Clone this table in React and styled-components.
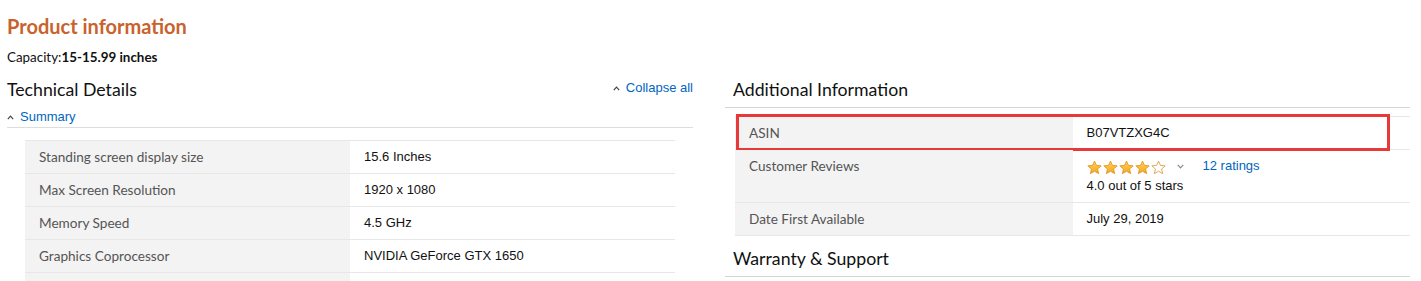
import React from "react";
import styled, { createGlobalStyle } from "styled-components";

const GlobalStyle = createGlobalStyle`
  html, body { margin: 0; padding: 0; background: #fff; }
  body { font-family: "Liberation Sans", Arial, sans-serif; color: #111; }
`;

const Page = styled.div`
  width: 1421px;
  box-sizing: border-box;
  padding: 14px 0 0 7px;
`;

const Title = styled.h2`
  margin: 0;
  font-family: Lato, "Noto Sans", sans-serif;
  font-weight: 700;
  font-size: 20px;
  line-height: 24px;
  color: #c9622c;
`;

const Capacity = styled.div`
  margin-top: 10px;
  font-family: Lato, "Noto Sans", sans-serif;
  font-size: 13.4px;
  line-height: 18px;
  color: #111;
  b { font-weight: 700; }
`;

const Columns = styled.div`
  margin-top: 12px;
  display: grid;
  grid-template-columns: 686px 685px;
  column-gap: 32px;
  align-items: start;
`;

const Column = styled.section`
  display: flex;
  flex-direction: column;
`;

const HeaderRow = styled.div`
  display: flex;
  align-items: center;
  justify-content: space-between;
  height: 24px;
`;

const Heading = styled.h3`
  margin: 0;
  font-family: Lato, "Noto Sans", sans-serif;
  font-weight: 400;
  font-size: 17.7px;
  line-height: 24px;
  color: #0f1111;
  padding-left: ${(p) => p.$indent || 0}px;
  padding-bottom: ${(p) => (p.$ruled ? 5 : 0)}px;
  border-bottom: ${(p) => (p.$ruled ? "1px solid #d5d5d5" : "none")};
  margin-top: ${(p) => p.$top || 0}px;
`;

const ToggleLink = styled.a`
  display: inline-flex;
  align-items: center;
  gap: 6px;
  font-family: "Liberation Sans", Arial, sans-serif;
  font-size: 13px;
  line-height: 18px;
  height: 18px;
  color: #0066c0;
  text-decoration: none;
  cursor: pointer;
  margin-top: ${(p) => p.$shift || 0}px;
`;

const SummaryRow = styled.div`
  display: flex;
  align-items: center;
  height: 18px;
  margin-top: 6px;
  padding-bottom: 1px;
  border-bottom: 1px solid #dddddd;
`;

const DetailTable = styled.div`
  margin: ${(p) => p.$top}px ${(p) => p.$right}px 0 ${(p) => p.$left}px;
  border-top: 1px solid #e7e7e7;
  display: flex;
  flex-direction: column;
`;

const Row = styled.div`
  position: relative;
  display: grid;
  grid-template-columns: 50% 50%;
  min-height: 32px;
  border-bottom: 1px solid #e7e7e7;
`;

const KeyCell = styled.div`
  background: #f3f3f3;
  padding: 7px 14px;
  font-family: Lato, "Noto Sans", sans-serif;
  font-size: 13.6px;
  line-height: 18px;
  color: #555;
`;

const ValueCell = styled.div`
  padding: 7px 14px;
  font-family: "Liberation Sans", Arial, sans-serif;
  font-size: 13px;
  line-height: 18px;
  color: #111;
`;

const Highlight = styled.div`
  position: absolute;
  left: 1px;
  top: -3px;
  width: 654px;
  height: 37px;
  box-sizing: border-box;
  border: 3px solid #e8393a;
  pointer-events: none;
`;

const RatingLine = styled.div`
  display: flex;
  align-items: center;
  height: 20px;
`;

const Stars = styled.span`
  display: inline-flex;
  gap: 1px;
`;

const Chevron = styled.span`
  display: inline-flex;
  margin-left: 11px;
  margin-top: -2px;
`;

const RatingsLink = styled.a`
  margin-left: 19px;
  color: #0066c0;
  text-decoration: none;
  margin-top: -2px;
`;

const Caret = ({ up = true, color = "#444" }) => (
  <svg width="7" height="5" viewBox="0 0 7 5">
    <path
      d={up ? "M0.8 4.2 L3.5 1.2 L6.2 4.2" : "M0.8 0.8 L3.5 3.8 L6.2 0.8"}
      fill="none"
      stroke={color}
      strokeWidth="1.2"
    />
  </svg>
);

const STAR = "M8 0.9 L10.1 5.5 L15.1 6 L11.3 9.3 L12.4 14.3 L8 11.7 L3.6 14.3 L4.7 9.3 L0.9 6 L5.9 5.5 Z";

const Star = ({ filled }) => (
  <svg width="15" height="15" viewBox="0 0 16 15.5">
    <defs>
      <linearGradient id="starGrad" x1="0" y1="0" x2="0" y2="1">
        <stop offset="0" stopColor="#ffd25c" />
        <stop offset="1" stopColor="#f5a623" />
      </linearGradient>
    </defs>
    <path
      d={STAR}
      fill={filled ? "url(#starGrad)" : "#fff"}
      stroke={filled ? "#e2921b" : "#d99a3a"}
      strokeWidth="0.9"
      strokeLinejoin="round"
    />
  </svg>
);

const technical = [
  ["Standing screen display size", "15.6 Inches"],
  ["Max Screen Resolution", "1920 x 1080"],
  ["Memory Speed", "4.5 GHz"],
  ["Graphics Coprocessor", "NVIDIA GeForce GTX 1650"],
  ["", ""],
];

export default function App() {
  return (
    <Page>
      <GlobalStyle />
      <Title>Product information</Title>
      <Capacity>
        Capacity:<b>15-15.99 inches</b>
      </Capacity>
      <Columns>
        <Column>
          <HeaderRow>
            <Heading>Technical Details</Heading>
            <ToggleLink $shift={-4}>
              <Caret />
              Collapse all
            </ToggleLink>
          </HeaderRow>
          <SummaryRow>
            <ToggleLink>
              <Caret />
              Summary
            </ToggleLink>
          </SummaryRow>
          <DetailTable $top={12} $left={18} $right={18}>
            {technical.map(([k, v], i) => (
              <Row key={i}>
                <KeyCell>{k}</KeyCell>
                <ValueCell>{v}</ValueCell>
              </Row>
            ))}
          </DetailTable>
        </Column>
        <Column>
          <Heading $indent={8} $ruled>
            Additional Information
          </Heading>
          <DetailTable $top={8} $left={10} $right={0}>
            <Row>
              <KeyCell>ASIN</KeyCell>
              <ValueCell>B07VTZXG4C</ValueCell>
              <Highlight />
            </Row>
            <Row>
              <KeyCell>Customer Reviews</KeyCell>
              <ValueCell>
                <RatingLine>
                  <Stars>
                    {[1, 2, 3, 4, 5].map((i) => (
                      <Star key={i} filled={i <= 4} />
                    ))}
                  </Stars>
                  <Chevron>
                    <Caret up={false} color="#888" />
                  </Chevron>
                  <RatingsLink>12 ratings</RatingsLink>
                </RatingLine>
                <div>4.0 out of 5 stars</div>
              </ValueCell>
            </Row>
            <Row>
              <KeyCell>Date First Available</KeyCell>
              <ValueCell>July 29, 2019</ValueCell>
            </Row>
          </DetailTable>
          <Heading $indent={8} $ruled $top={11}>
            Warranty &amp; Support
          </Heading>
        </Column>
      </Columns>
    </Page>
  );
}
